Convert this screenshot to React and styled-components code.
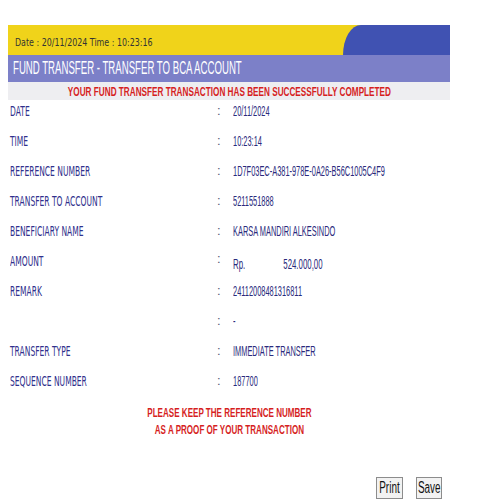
import React from 'react'
import styled, { createGlobalStyle } from 'styled-components'

const GlobalStyle = createGlobalStyle`
    html, body {
        margin: 0;
        background: #ffffff;
        font-family: "Liberation Sans", Arial, sans-serif;
    }
`

const Page = styled.div`
    padding: 25px 8px 0;
    width: 442px;
`

// the source text is very narrow, so each run of text is squeezed horizontally
const Squeeze = styled.span`
    display: inline-block;
    white-space: nowrap;
    transform: scaleX(${props => props.$sx || 0.62});
    transform-origin: ${props => props.$origin || 'left'} center;
`

const TopBar = styled.div`
    display: flex;
    height: 30px;
    background: #f0d31a;
`

const DateText = styled.div`
    flex: 1;
    display: flex;
    align-items: center;
    padding: 4px 0 0 7px;
    font-family: "DejaVu Sans", sans-serif;
    font-size: 11px;
    color: #333333;
`

const BlueCorner = styled.div`
    width: 107px;
    background: #4052b2;
    border-top-left-radius: 18px 30px;
`

const TitleBar = styled.div`
    height: 27px;
    display: flex;
    align-items: center;
    padding-left: 5px;
    background: #7c80c8;
    color: #ffffff;
    font-size: 17.5px;
`

const MessageBar = styled.div`
    height: 18px;
    display: flex;
    align-items: center;
    justify-content: center;
    background: #eeeef1;
    color: #d61f1f;
    font-size: 13px;
    font-weight: bold;
`

const DetailGrid = styled.div`
    display: grid;
    grid-template-columns: 207px 12px 1fr;
    grid-auto-rows: 30px;
    line-height: 16px;
`

const Label = styled.div`
    padding: 3px 0 0 2px;
    font-family: "DejaVu Sans", sans-serif;
    font-size: 13.5px;
    color: #30308c;
`

const Colon = styled.div`
    padding: ${props => (props.$high ? '1px' : '3px')} 0 0 2px;
    font-size: 13px;
    color: #555577;
`

const Value = styled.div`
    padding: ${props => (props.$low ? '6px' : '3px')} 0 0 6px;
    font-size: 14px;
    color: #2a2a7c;
`

const AmountFigure = styled.span`
    margin-left: ${props => props.$gap}px;
`

const Note = styled.div`
    margin-top: 4px;
    text-align: center;
    color: #d61f1f;
    font-size: 13px;
    font-weight: bold;
    line-height: 17px;
`

const ButtonRow = styled.div`
    display: flex;
    justify-content: flex-end;
    gap: 13px;
    margin-top: 39px;
    padding-right: 8px;
`

const ActionButton = styled.button`
    height: 22px;
    width: ${props => props.$width}px;
    padding: 0;
    border: 1px solid #8c8c8c;
    border-radius: 0;
    background: #f2f2f2;
    color: #111111;
    font: inherit;
    font-size: 16px;
    display: flex;
    align-items: center;
    justify-content: center;
`

const details = [
    { label: 'DATE', value: '20/11/2024' },
    { label: 'TIME', value: '10:23:14' },
    { label: 'REFERENCE NUMBER', value: '1D7F03EC-A381-978E-0A26-B56C1005C4F9' },
    { label: 'TRANSFER TO ACCOUNT', value: '5211551888' },
    { label: 'BENEFICIARY NAME', value: 'KARSA MANDIRI ALKESINDO' },
    { label: 'AMOUNT', amount: '524.000,00' },
    { label: 'REMARK', value: '24112008481316811' },
    { label: '', value: '-' },
    { label: 'TRANSFER TYPE', value: 'IMMEDIATE TRANSFER' },
    { label: 'SEQUENCE NUMBER', value: '187700' }
]

export default function App() {
    return (
        <Page>
            <GlobalStyle />
            <TopBar>
                <DateText>
                    <Squeeze $sx={0.72}>Date : 20/11/2024 Time : 10:23:16</Squeeze>
                </DateText>
                <BlueCorner />
            </TopBar>
            <TitleBar>
                <Squeeze $sx={0.55}>FUND TRANSFER - TRANSFER TO BCA ACCOUNT</Squeeze>
            </TitleBar>
            <MessageBar>
                <Squeeze $sx={0.63} $origin="center">
                    YOUR FUND TRANSFER TRANSACTION HAS BEEN SUCCESSFULLY COMPLETED
                </Squeeze>
            </MessageBar>
            <DetailGrid>
                {details.map((row, i) => (
                    <React.Fragment key={i}>
                        <Label>
                            <Squeeze $sx={0.56}>{row.label}</Squeeze>
                        </Label>
                        <Colon $high={!!row.amount}>:</Colon>
                        {row.amount ? (
                            <Value $low>
                                <Squeeze $sx={0.56}>
                                    Rp.
                                    <AmountFigure $gap={68}>{row.amount}</AmountFigure>
                                </Squeeze>
                            </Value>
                        ) : (
                            <Value>
                                <Squeeze $sx={0.53}>{row.value}</Squeeze>
                            </Value>
                        )}
                    </React.Fragment>
                ))}
            </DetailGrid>
            <Note>
                <div>
                    <Squeeze $sx={0.62} $origin="center">PLEASE KEEP THE REFERENCE NUMBER</Squeeze>
                </div>
                <div>
                    <Squeeze $sx={0.62} $origin="center">AS A PROOF OF YOUR TRANSACTION</Squeeze>
                </div>
            </Note>
            <ButtonRow>
                <ActionButton $width={27}>
                    <Squeeze $sx={0.62} $origin="center">Print</Squeeze>
                </ActionButton>
                <ActionButton $width={26}>
                    <Squeeze $sx={0.62} $origin="center">Save</Squeeze>
                </ActionButton>
            </ButtonRow>
        </Page>
    )
}
